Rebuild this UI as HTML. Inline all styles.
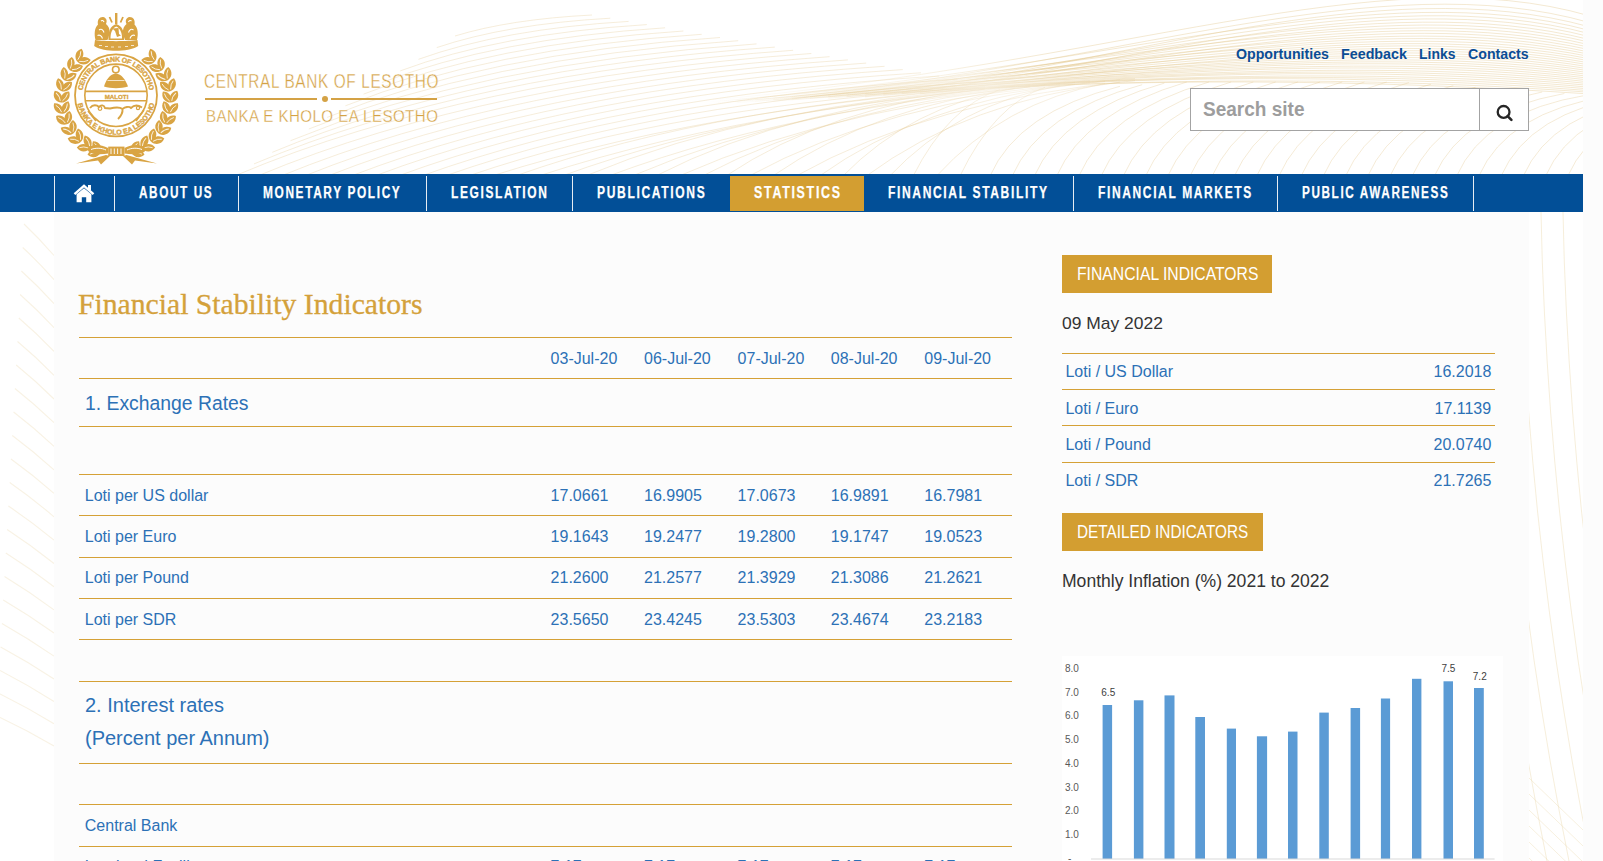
<!DOCTYPE html>
<html><head><meta charset="utf-8">
<style>
*{margin:0;padding:0;box-sizing:border-box}
html,body{width:1603px;height:861px;overflow:hidden;background:#fcfcfc;font-family:"Liberation Sans",sans-serif}
.abs{position:absolute}
.t{position:absolute;white-space:nowrap;transform-origin:0 0}
#wrap{position:absolute;left:0;top:0;width:1583px;height:861px;background:#fff;overflow:hidden}
#content{position:absolute;left:54px;top:212px;width:1475px;height:649px;background:#fcfcfc}
.nav{position:absolute;left:0;top:174px;width:1583px;height:38px;background:#024f97}
.dv{position:absolute;top:176px;width:1px;height:35px;background:#e6ecf3}
.hl{position:absolute;left:79px;width:933px;height:1px;background:#d5a136}
.sl{position:absolute;left:1062px;width:433px;height:1px;background:#d5a136}
.gbtn{position:absolute;left:1062px;height:38px;background:#d39e31}
</style></head><body>
<div id="wrap">
<svg class="abs" style="left:0;top:0" width="1583" height="861" viewBox="0 0 1583 861"><defs><linearGradient id="rfg" gradientUnits="userSpaceOnUse" x1="700" y1="0" x2="1050" y2="0"><stop offset="0" stop-color="#e3c88f" stop-opacity="0"/><stop offset="1" stop-color="#e3c88f" stop-opacity="1"/></linearGradient><clipPath id="rsc"><rect x="1529" y="212" width="54" height="649"/></clipPath><radialGradient id="pg" cx="0.5" cy="0.5" r="0.5"><stop offset="0" stop-color="#fff" stop-opacity="0.55"/><stop offset="1" stop-color="#fff" stop-opacity="0"/></radialGradient></defs><g><path d="M455.0,36.0 Q509.8,19.2 592.0,15.0" fill="none" stroke="#e3c88f" stroke-width="0.9" opacity="0.36"/><path d="M436.7,47.6 Q506.1,24.1 610.3,18.2" fill="none" stroke="#e3c88f" stroke-width="0.9" opacity="0.36"/><path d="M418.5,59.3 Q502.5,29.0 628.6,21.4" fill="none" stroke="#e3c88f" stroke-width="0.9" opacity="0.36"/><path d="M400.2,70.9 Q498.8,33.9 646.8,24.6" fill="none" stroke="#e3c88f" stroke-width="0.9" opacity="0.36"/><path d="M381.9,82.5 Q495.2,38.8 665.1,27.8" fill="none" stroke="#e3c88f" stroke-width="0.9" opacity="0.36"/><path d="M363.6,94.1 Q491.5,43.7 683.4,31.0" fill="none" stroke="#e3c88f" stroke-width="0.9" opacity="0.36"/><path d="M345.4,105.8 Q487.9,48.6 701.7,34.3" fill="none" stroke="#e3c88f" stroke-width="0.9" opacity="0.36"/><path d="M327.1,117.4 Q484.2,53.5 720.0,37.5" fill="none" stroke="#e3c88f" stroke-width="0.9" opacity="0.36"/><path d="M308.8,129.0 Q480.6,58.3 738.2,40.7" fill="none" stroke="#e3c88f" stroke-width="0.9" opacity="0.36"/><path d="M290.5,140.7 Q476.9,63.2 756.5,43.9" fill="none" stroke="#e3c88f" stroke-width="0.9" opacity="0.36"/><path d="M272.3,152.3 Q473.3,68.1 774.8,47.1" fill="none" stroke="#e3c88f" stroke-width="0.9" opacity="0.36"/><path d="M254.0,163.9 Q469.6,73.0 793.1,50.3" fill="none" stroke="#e3c88f" stroke-width="0.9" opacity="0.36"/><path d="M235.7,175.5 Q466.0,77.9 811.3,53.5" fill="none" stroke="#e3c88f" stroke-width="0.9" opacity="0.36"/><path d="M257.5,176.0 Q486.3,80.6 829.6,56.7" fill="none" stroke="#e3c88f" stroke-width="0.9" opacity="0.36"/><path d="M280.9,176.0 Q507.7,83.1 847.9,59.9" fill="none" stroke="#e3c88f" stroke-width="0.9" opacity="0.36"/><path d="M304.3,176.0 Q529.1,85.7 866.2,63.1" fill="none" stroke="#e3c88f" stroke-width="0.9" opacity="0.36"/><path d="M327.7,176.0 Q550.4,88.3 884.5,66.3" fill="none" stroke="#e3c88f" stroke-width="0.9" opacity="0.36"/><path d="M351.1,176.0 Q571.8,90.8 902.7,69.6" fill="none" stroke="#e3c88f" stroke-width="0.9" opacity="0.36"/><path d="M374.6,176.0 Q593.1,93.4 921.0,72.8" fill="none" stroke="#e3c88f" stroke-width="0.9" opacity="0.36"/><path d="M398.0,176.0 Q614.5,96.0 939.3,76.0" fill="none" stroke="#e3c88f" stroke-width="0.9" opacity="0.36"/><path d="M421.4,176.0 Q635.9,98.5 957.6,79.2" fill="none" stroke="#e3c88f" stroke-width="0.9" opacity="0.36"/><path d="M444.8,176.0 Q657.2,101.1 975.9,82.4" fill="none" stroke="#e3c88f" stroke-width="0.9" opacity="0.36"/><path d="M468.2,176.0 Q674.9,104.8 985.0,87.0" fill="none" stroke="#e3c88f" stroke-width="0.9" opacity="0.36"/><path d="M491.7,176.0 Q731.0,99.9 1090.0,80.9" fill="none" stroke="#e3c88f" stroke-width="0.9" opacity="0.36"/><path d="M515.1,176.0 Q721.0,102.9 1030.0,84.7" fill="none" stroke="#e3c88f" stroke-width="0.9" opacity="0.36"/><path d="M538.5,176.0 Q777.1,98.0 1135.0,78.6" fill="none" stroke="#e3c88f" stroke-width="0.9" opacity="0.36"/><path d="M561.9,176.0 Q767.1,101.1 1075.0,82.3" fill="none" stroke="#e3c88f" stroke-width="0.9" opacity="0.36"/><path d="M585.3,176.0 Q757.2,104.1 1015.0,86.1" fill="none" stroke="#e3c88f" stroke-width="0.9" opacity="0.36"/><path d="M608.7,176.0 Q813.2,99.2 1120.0,80.0" fill="none" stroke="#e3c88f" stroke-width="0.9" opacity="0.36"/><path d="M632.2,176.0 Q803.3,102.2 1060.0,83.8" fill="none" stroke="#e3c88f" stroke-width="0.9" opacity="0.36"/><path d="M655.6,176.0 Q793.3,105.3 1000.0,87.6" fill="none" stroke="#e3c88f" stroke-width="0.9" opacity="0.36"/><path d="M679.0,176.0 Q849.4,100.4 1105.0,81.5" fill="none" stroke="#e3c88f" stroke-width="0.9" opacity="0.36"/><path d="M702.4,176.0 Q839.4,103.4 1045.0,85.3" fill="none" stroke="#e3c88f" stroke-width="0.9" opacity="0.36"/><path d="M725.8,176.0 Q829.5,106.4 985.0,89.0" fill="none" stroke="#e3c88f" stroke-width="0.9" opacity="0.36"/><path d="M749.2,176.0 Q885.5,101.5 1090.0,82.9" fill="none" stroke="#e3c88f" stroke-width="0.9" opacity="0.36"/><path d="M772.7,176.0 Q875.6,104.6 1030.0,86.7" fill="none" stroke="#e3c88f" stroke-width="0.9" opacity="0.36"/><path d="M796.1,176.0 Q931.6,99.7 1135.0,80.6" fill="none" stroke="#e3c88f" stroke-width="0.9" opacity="0.36"/><path d="M819.5,176.0 Q921.7,102.7 1075.0,84.4" fill="none" stroke="#e3c88f" stroke-width="0.9" opacity="0.36"/><path d="M842.9,176.0 Q911.7,105.7 1015.0,88.2" fill="none" stroke="#e3c88f" stroke-width="0.9" opacity="0.36"/><path d="M866.3,176.0 Q967.8,100.8 1120.0,82.1" fill="none" stroke="#e3c88f" stroke-width="0.9" opacity="0.36"/><path d="M889.7,176.0 Q957.8,103.9 1060.0,85.8" fill="none" stroke="#e3c88f" stroke-width="0.9" opacity="0.36"/><path d="M913.2,176.0 Q947.9,106.9 1000.0,89.6" fill="none" stroke="#e3c88f" stroke-width="0.9" opacity="0.36"/><path d="M936.6,176.0 Q1003.9,102.0 1105.0,83.5" fill="none" stroke="#e3c88f" stroke-width="0.9" opacity="0.36"/><path d="M960.0,176.0 Q994.0,105.0 1045.0,87.3" fill="none" stroke="#e3c88f" stroke-width="0.9" opacity="0.36"/><path d="M700.0,101.0 C1120.0,65.0 1380.0,-45.0 1590.0,16.0" fill="none" stroke="url(#rfg)" stroke-width="0.9" opacity="0.45"/><path d="M791.6666666666666,96.5 C1120.0,65.3 1380.0,-37.4 1590.0,22.7" fill="none" stroke="url(#rfg)" stroke-width="0.9" opacity="0.45"/><path d="M883.3333333333334,92.1 C1120.0,65.6 1380.0,-31.7 1590.0,27.0" fill="none" stroke="url(#rfg)" stroke-width="0.9" opacity="0.45"/><path d="M736.6666666666666,99.5 C1120.0,65.9 1380.0,-26.6 1590.0,30.6" fill="none" stroke="url(#rfg)" stroke-width="0.9" opacity="0.45"/><path d="M828.3333333333334,95.1 C1120.0,66.2 1380.0,-21.9 1590.0,33.8" fill="none" stroke="url(#rfg)" stroke-width="0.9" opacity="0.45"/><path d="M920.0,90.6 C1120.0,66.5 1380.0,-17.4 1590.0,36.8" fill="none" stroke="url(#rfg)" stroke-width="0.9" opacity="0.45"/><path d="M773.3333333333334,98.1 C1120.0,66.8 1380.0,-13.0 1590.0,39.7" fill="none" stroke="url(#rfg)" stroke-width="0.9" opacity="0.45"/><path d="M865.0,93.6 C1120.0,67.1 1380.0,-8.8 1590.0,42.3" fill="none" stroke="url(#rfg)" stroke-width="0.9" opacity="0.45"/><path d="M718.3333333333334,101.1 C1120.0,67.4 1380.0,-4.8 1590.0,44.9" fill="none" stroke="url(#rfg)" stroke-width="0.9" opacity="0.45"/><path d="M810.0,96.6 C1120.0,67.7 1380.0,-0.8 1590.0,47.4" fill="none" stroke="url(#rfg)" stroke-width="0.9" opacity="0.45"/><path d="M901.6666666666666,92.1 C1120.0,68.0 1380.0,3.1 1590.0,49.8" fill="none" stroke="url(#rfg)" stroke-width="0.9" opacity="0.45"/><path d="M755.0,99.6 C1120.0,68.3 1380.0,6.9 1590.0,52.2" fill="none" stroke="url(#rfg)" stroke-width="0.9" opacity="0.45"/><path d="M846.6666666666666,95.1 C1120.0,68.6 1380.0,10.6 1590.0,54.4" fill="none" stroke="url(#rfg)" stroke-width="0.9" opacity="0.45"/><path d="M700.0,102.6 C1120.0,68.9 1380.0,14.3 1590.0,56.6" fill="none" stroke="url(#rfg)" stroke-width="0.9" opacity="0.45"/><path d="M791.6666666666666,98.1 C1120.0,69.2 1380.0,18.0 1590.0,58.8" fill="none" stroke="url(#rfg)" stroke-width="0.9" opacity="0.45"/><path d="M883.3333333333334,93.7 C1120.0,69.5 1380.0,21.5 1590.0,60.9" fill="none" stroke="url(#rfg)" stroke-width="0.9" opacity="0.45"/><path d="M736.6666666666666,101.1 C1120.0,69.8 1380.0,25.0 1590.0,63.0" fill="none" stroke="url(#rfg)" stroke-width="0.9" opacity="0.45"/><path d="M828.3333333333334,96.6 C1120.0,70.2 1380.0,28.5 1590.0,65.0" fill="none" stroke="url(#rfg)" stroke-width="0.9" opacity="0.45"/><path d="M920.0,92.2 C1120.0,70.5 1380.0,32.0 1590.0,67.0" fill="none" stroke="url(#rfg)" stroke-width="0.9" opacity="0.45"/><path d="M773.3333333333334,99.6 C1120.0,70.8 1380.0,35.4 1590.0,69.0" fill="none" stroke="url(#rfg)" stroke-width="0.9" opacity="0.45"/><path d="M865.0,95.2 C1120.0,71.1 1380.0,38.7 1590.0,70.9" fill="none" stroke="url(#rfg)" stroke-width="0.9" opacity="0.45"/><path d="M718.3333333333334,102.6 C1120.0,71.4 1380.0,42.1 1590.0,72.8" fill="none" stroke="url(#rfg)" stroke-width="0.9" opacity="0.45"/><path d="M810.0,98.2 C1120.0,71.7 1380.0,45.4 1590.0,74.7" fill="none" stroke="url(#rfg)" stroke-width="0.9" opacity="0.45"/><path d="M901.6666666666666,93.7 C1120.0,72.0 1380.0,48.6 1590.0,76.6" fill="none" stroke="url(#rfg)" stroke-width="0.9" opacity="0.45"/><path d="M755.0,101.2 C1120.0,72.3 1380.0,51.9 1590.0,78.4" fill="none" stroke="url(#rfg)" stroke-width="0.9" opacity="0.45"/><path d="M846.6666666666666,96.7 C1120.0,72.6 1380.0,55.1 1590.0,80.2" fill="none" stroke="url(#rfg)" stroke-width="0.9" opacity="0.45"/><path d="M700.0,104.2 C1120.0,72.9 1380.0,58.3 1590.0,82.0" fill="none" stroke="url(#rfg)" stroke-width="0.9" opacity="0.45"/><path d="M791.6666666666666,99.7 C1120.0,73.2 1380.0,61.5 1590.0,83.8" fill="none" stroke="url(#rfg)" stroke-width="0.9" opacity="0.45"/><path d="M883.3333333333334,95.2 C1120.0,73.5 1380.0,64.6 1590.0,85.5" fill="none" stroke="url(#rfg)" stroke-width="0.9" opacity="0.45"/><path d="M736.6666666666666,102.7 C1120.0,73.8 1380.0,67.7 1590.0,87.3" fill="none" stroke="url(#rfg)" stroke-width="0.9" opacity="0.45"/><path d="M828.3333333333334,98.2 C1120.0,74.1 1380.0,70.8 1590.0,89.0" fill="none" stroke="url(#rfg)" stroke-width="0.9" opacity="0.45"/><path d="M920.0,93.8 C1120.0,74.4 1380.0,73.9 1590.0,90.7" fill="none" stroke="url(#rfg)" stroke-width="0.9" opacity="0.45"/><path d="M773.3333333333334,101.2 C1120.0,74.7 1380.0,77.0 1590.0,92.3" fill="none" stroke="url(#rfg)" stroke-width="0.9" opacity="0.45"/><path d="M865.0,96.8 C1120.0,75.0 1380.0,80.0 1590.0,94.0" fill="none" stroke="url(#rfg)" stroke-width="0.9" opacity="0.45"/><path d="M990.0,176 Q1018.0,112.0 1120.0,86.3" fill="none" stroke="#e3c88f" stroke-width="0.9" opacity="0.40"/><path d="M1012.2,176 Q1040.2,112.0 1142.2,84.7" fill="none" stroke="#e3c88f" stroke-width="0.9" opacity="0.40"/><path d="M1034.4,176 Q1062.4,112.0 1164.4,83.1" fill="none" stroke="#e3c88f" stroke-width="0.9" opacity="0.40"/><path d="M1056.7,176 Q1084.7,112.0 1186.7,82.0" fill="none" stroke="#e3c88f" stroke-width="0.9" opacity="0.40"/><path d="M1078.9,176 Q1106.9,112.0 1208.9,82.0" fill="none" stroke="#e3c88f" stroke-width="0.9" opacity="0.40"/><path d="M1101.1,176 Q1129.1,112.0 1231.1,82.0" fill="none" stroke="#e3c88f" stroke-width="0.9" opacity="0.40"/><path d="M1123.3,176 Q1151.3,112.0 1253.3,82.0" fill="none" stroke="#e3c88f" stroke-width="0.9" opacity="0.40"/><path d="M1145.6,176 Q1173.6,112.0 1275.6,82.0" fill="none" stroke="#e3c88f" stroke-width="0.9" opacity="0.40"/><path d="M1167.8,176 Q1195.8,112.0 1297.8,82.0" fill="none" stroke="#e3c88f" stroke-width="0.9" opacity="0.40"/><path d="M1190.0,176 Q1218.0,112.0 1320.0,82.0" fill="none" stroke="#e3c88f" stroke-width="0.9" opacity="0.40"/><path d="M1212.2,176 Q1240.2,112.0 1342.2,82.0" fill="none" stroke="#e3c88f" stroke-width="0.9" opacity="0.40"/><path d="M1234.4,176 Q1262.4,112.0 1364.4,82.0" fill="none" stroke="#e3c88f" stroke-width="0.9" opacity="0.40"/><path d="M1256.7,176 Q1284.7,112.0 1386.7,82.0" fill="none" stroke="#e3c88f" stroke-width="0.9" opacity="0.40"/><path d="M1278.9,176 Q1306.9,112.0 1408.9,82.6" fill="none" stroke="#e3c88f" stroke-width="0.9" opacity="0.40"/><path d="M1301.1,176 Q1329.1,112.0 1431.1,84.2" fill="none" stroke="#e3c88f" stroke-width="0.9" opacity="0.40"/><path d="M1323.3,176 Q1351.3,112.0 1453.3,85.7" fill="none" stroke="#e3c88f" stroke-width="0.9" opacity="0.40"/><path d="M1345.6,176 Q1373.6,112.0 1475.6,87.3" fill="none" stroke="#e3c88f" stroke-width="0.9" opacity="0.40"/><path d="M1367.8,176 Q1395.8,112.0 1497.8,88.8" fill="none" stroke="#e3c88f" stroke-width="0.9" opacity="0.40"/><path d="M1390.0,176 Q1418.0,112.0 1520.0,90.4" fill="none" stroke="#e3c88f" stroke-width="0.9" opacity="0.40"/><path d="M1412.2,176 Q1440.2,112.0 1542.2,92.0" fill="none" stroke="#e3c88f" stroke-width="0.9" opacity="0.40"/><path d="M1434.4,176 Q1462.4,112.0 1564.4,93.5" fill="none" stroke="#e3c88f" stroke-width="0.9" opacity="0.40"/><path d="M1456.7,176 Q1484.7,112.0 1586.7,95.1" fill="none" stroke="#e3c88f" stroke-width="0.9" opacity="0.40"/><path d="M1478.9,176 Q1506.9,112.0 1608.9,96.0" fill="none" stroke="#e3c88f" stroke-width="0.9" opacity="0.40"/><path d="M1501.1,176 Q1529.1,112.0 1631.1,96.0" fill="none" stroke="#e3c88f" stroke-width="0.9" opacity="0.40"/><path d="M1523.3,176 Q1551.3,112.0 1653.3,96.0" fill="none" stroke="#e3c88f" stroke-width="0.9" opacity="0.40"/><path d="M1545.6,176 Q1573.6,112.0 1675.6,96.0" fill="none" stroke="#e3c88f" stroke-width="0.9" opacity="0.40"/><path d="M1567.8,176 Q1595.8,112.0 1697.8,96.0" fill="none" stroke="#e3c88f" stroke-width="0.9" opacity="0.40"/><path d="M1590.0,176 Q1618.0,112.0 1720.0,96.0" fill="none" stroke="#e3c88f" stroke-width="0.9" opacity="0.40"/><path d="M24.0,224.0 Q39.0,238.2 54,255.5" fill="none" stroke="#ecdcb3" stroke-width="1.1" opacity="0.36"/><path d="M22.7,247.5 Q38.4,261.9 54,279.6" fill="none" stroke="#ecdcb3" stroke-width="1.1" opacity="0.36"/><path d="M21.4,271.0 Q37.7,285.7 54,303.6" fill="none" stroke="#ecdcb3" stroke-width="1.1" opacity="0.36"/><path d="M20.1,294.5 Q37.0,309.4 54,327.6" fill="none" stroke="#ecdcb3" stroke-width="1.1" opacity="0.36"/><path d="M18.8,318.0 Q36.4,333.0 54,351.4" fill="none" stroke="#ecdcb3" stroke-width="1.1" opacity="0.36"/><path d="M17.5,341.5 Q35.8,356.7 54,375.3" fill="none" stroke="#ecdcb3" stroke-width="1.1" opacity="0.36"/><path d="M16.2,365.0 Q35.1,380.3 54,399.0" fill="none" stroke="#ecdcb3" stroke-width="1.1" opacity="0.36"/><path d="M14.9,388.5 Q34.5,403.9 54,422.7" fill="none" stroke="#ecdcb3" stroke-width="1.1" opacity="0.36"/><path d="M13.6,412.0 Q33.8,427.5 54,446.3" fill="none" stroke="#ecdcb3" stroke-width="1.1" opacity="0.36"/><path d="M12.3,435.5 Q33.1,451.0 54,469.9" fill="none" stroke="#ecdcb3" stroke-width="1.1" opacity="0.36"/><path d="M11.0,459.0 Q32.5,474.5 54,493.4" fill="none" stroke="#ecdcb3" stroke-width="1.1" opacity="0.36"/><path d="M9.7,482.5 Q31.9,497.9 54,516.8" fill="none" stroke="#ecdcb3" stroke-width="1.1" opacity="0.36"/><path d="M8.4,506.0 Q31.2,521.4 54,540.2" fill="none" stroke="#ecdcb3" stroke-width="1.1" opacity="0.36"/><path d="M7.1,529.5 Q30.5,544.8 54,563.5" fill="none" stroke="#ecdcb3" stroke-width="1.1" opacity="0.36"/><path d="M5.8,553.0 Q29.9,568.2 54,586.7" fill="none" stroke="#ecdcb3" stroke-width="1.1" opacity="0.36"/><path d="M4.5,576.5 Q29.2,591.5 54,609.9" fill="none" stroke="#ecdcb3" stroke-width="1.1" opacity="0.36"/><path d="M3.2,600.0 Q28.6,614.9 54,633.0" fill="none" stroke="#ecdcb3" stroke-width="1.1" opacity="0.36"/><path d="M1.9,623.5 Q27.9,638.2 54,656.1" fill="none" stroke="#ecdcb3" stroke-width="1.1" opacity="0.36"/><path d="M0.6,647.0 Q27.3,661.4 54,679.0" fill="none" stroke="#ecdcb3" stroke-width="1.1" opacity="0.36"/><path d="M0.0,670.5 Q27.0,684.5 54,701.5" fill="none" stroke="#ecdcb3" stroke-width="1.1" opacity="0.36"/><path d="M0.0,694.0 Q27.0,707.4 54,723.7" fill="none" stroke="#ecdcb3" stroke-width="1.1" opacity="0.36"/><path d="M0.0,717.5 Q27.0,730.3 54,745.9" fill="none" stroke="#ecdcb3" stroke-width="1.1" opacity="0.36"/><g clip-path="url(#rsc)"><path d="M1453.0,212.0 L1454.3,262.0 L1456.4,312.0 L1459.2,362.0 L1462.6,412.0 L1466.8,462.0 L1471.6,512.0 L1477.2,562.0 L1483.4,612.0 L1490.3,662.0 L1498.0,712.0 L1506.3,762.0 L1515.4,812.0 L1525.2,862.0" fill="none" stroke="#ead9b0" stroke-width="1" opacity="0.45"/><path d="M1475.0,212.0 L1476.3,262.0 L1478.4,312.0 L1481.2,362.0 L1484.6,412.0 L1488.8,462.0 L1493.6,512.0 L1499.2,562.0 L1505.4,612.0 L1512.3,662.0 L1520.0,712.0 L1528.3,762.0 L1537.4,812.0 L1547.2,862.0" fill="none" stroke="#ead9b0" stroke-width="1" opacity="0.45"/><path d="M1497.0,212.0 L1498.3,262.0 L1500.4,312.0 L1503.2,362.0 L1506.6,412.0 L1510.8,462.0 L1515.6,512.0 L1521.2,562.0 L1527.4,612.0 L1534.3,662.0 L1542.0,712.0 L1550.3,762.0 L1559.4,812.0 L1569.2,862.0" fill="none" stroke="#ead9b0" stroke-width="1" opacity="0.45"/><path d="M1519.0,212.0 L1520.3,262.0 L1522.4,312.0 L1525.2,362.0 L1528.6,412.0 L1532.8,462.0 L1537.6,512.0 L1543.2,562.0 L1549.4,612.0 L1556.3,662.0 L1564.0,712.0 L1572.3,762.0 L1581.4,812.0 L1591.2,862.0" fill="none" stroke="#ead9b0" stroke-width="1" opacity="0.45"/><path d="M1541.0,212.0 L1542.3,262.0 L1544.4,312.0 L1547.2,362.0 L1550.6,412.0 L1554.8,462.0 L1559.6,512.0 L1565.2,562.0 L1571.4,612.0 L1578.3,662.0 L1586.0,712.0 L1594.3,762.0 L1603.4,812.0 L1613.2,862.0" fill="none" stroke="#ead9b0" stroke-width="1" opacity="0.45"/><path d="M1563.0,212.0 L1564.3,262.0 L1566.4,312.0 L1569.2,362.0 L1572.6,412.0 L1576.8,462.0 L1581.6,512.0 L1587.2,562.0 L1593.4,612.0 L1600.3,662.0 L1608.0,712.0 L1616.3,762.0 L1625.4,812.0 L1635.2,862.0" fill="none" stroke="#ead9b0" stroke-width="1" opacity="0.45"/><path d="M1585.0,212.0 L1586.3,262.0 L1588.4,312.0 L1591.2,362.0 L1594.6,412.0 L1598.8,462.0 L1603.6,512.0 L1609.2,562.0 L1615.4,612.0 L1622.3,662.0 L1630.0,712.0 L1638.3,762.0 L1647.4,812.0 L1657.2,862.0" fill="none" stroke="#ead9b0" stroke-width="1" opacity="0.45"/><path d="M1607.0,212.0 L1608.3,262.0 L1610.4,312.0 L1613.2,362.0 L1616.6,412.0 L1620.8,462.0 L1625.6,512.0 L1631.2,562.0 L1637.4,612.0 L1644.3,662.0 L1652.0,712.0 L1660.3,762.0 L1669.4,812.0 L1679.2,862.0" fill="none" stroke="#ead9b0" stroke-width="1" opacity="0.45"/><path d="M1529,778 L1583,830" fill="none" stroke="#ead9b0" stroke-width="1" opacity="0.4"/><path d="M1529,794 L1583,846" fill="none" stroke="#ead9b0" stroke-width="1" opacity="0.4"/><path d="M1529,810 L1583,862" fill="none" stroke="#ead9b0" stroke-width="1" opacity="0.4"/><path d="M1529,826 L1583,878" fill="none" stroke="#ead9b0" stroke-width="1" opacity="0.4"/><path d="M1529,842 L1583,894" fill="none" stroke="#ead9b0" stroke-width="1" opacity="0.4"/><path d="M1529,858 L1583,910" fill="none" stroke="#ead9b0" stroke-width="1" opacity="0.4"/></g></g><ellipse cx="985" cy="88" rx="150" ry="22" fill="url(#pg)"/></svg>
<div id="content"></div>
<svg class="abs" style="left:0;top:0" width="200" height="170" viewBox="0 0 200 170"><g><g transform="translate(84.0,60.8) rotate(83.3)"><path d="M0,-6.8 C5.7,-2.7 4.2,4.0 0,6.8 C-4.2,4.0 -5.7,-2.7 0,-6.8Z" fill="#d9a443"/><path d="M0,-4.2 Q1.7,0 0,4.8" stroke="#fff" stroke-width="0.9" fill="none" opacity="0.85"/></g><g transform="translate(79.4,55.2) rotate(19.3)"><path d="M0,-6.8 C5.7,-2.7 4.2,4.0 0,6.8 C-4.2,4.0 -5.7,-2.7 0,-6.8Z" fill="#d9a443"/><path d="M0,-4.2 Q1.7,0 0,4.8" stroke="#fff" stroke-width="0.9" fill="none" opacity="0.85"/></g><g transform="translate(76.5,68.2) rotate(71.4)"><path d="M0,-6.8 C5.7,-2.7 4.2,4.0 0,6.8 C-4.2,4.0 -5.7,-2.7 0,-6.8Z" fill="#d9a443"/><path d="M0,-4.2 Q1.7,0 0,4.8" stroke="#fff" stroke-width="0.9" fill="none" opacity="0.85"/></g><g transform="translate(70.9,63.7) rotate(7.4)"><path d="M0,-6.8 C5.7,-2.7 4.2,4.0 0,6.8 C-4.2,4.0 -5.7,-2.7 0,-6.8Z" fill="#d9a443"/><path d="M0,-4.2 Q1.7,0 0,4.8" stroke="#fff" stroke-width="0.9" fill="none" opacity="0.85"/></g><g transform="translate(70.7,77.0) rotate(59.4)"><path d="M0,-6.8 C5.7,-2.7 4.2,4.0 0,6.8 C-4.2,4.0 -5.7,-2.7 0,-6.8Z" fill="#d9a443"/><path d="M0,-4.2 Q1.7,0 0,4.8" stroke="#fff" stroke-width="0.9" fill="none" opacity="0.85"/></g><g transform="translate(64.3,73.7) rotate(-4.6)"><path d="M0,-6.8 C5.7,-2.7 4.2,4.0 0,6.8 C-4.2,4.0 -5.7,-2.7 0,-6.8Z" fill="#d9a443"/><path d="M0,-4.2 Q1.7,0 0,4.8" stroke="#fff" stroke-width="0.9" fill="none" opacity="0.85"/></g><g transform="translate(66.9,86.7) rotate(47.4)"><path d="M0,-6.8 C5.7,-2.7 4.2,4.0 0,6.8 C-4.2,4.0 -5.7,-2.7 0,-6.8Z" fill="#d9a443"/><path d="M0,-4.2 Q1.7,0 0,4.8" stroke="#fff" stroke-width="0.9" fill="none" opacity="0.85"/></g><g transform="translate(60.0,84.8) rotate(-16.6)"><path d="M0,-6.8 C5.7,-2.7 4.2,4.0 0,6.8 C-4.2,4.0 -5.7,-2.7 0,-6.8Z" fill="#d9a443"/><path d="M0,-4.2 Q1.7,0 0,4.8" stroke="#fff" stroke-width="0.9" fill="none" opacity="0.85"/></g><g transform="translate(65.2,97.0) rotate(35.4)"><path d="M0,-6.8 C5.7,-2.7 4.2,4.0 0,6.8 C-4.2,4.0 -5.7,-2.7 0,-6.8Z" fill="#d9a443"/><path d="M0,-4.2 Q1.7,0 0,4.8" stroke="#fff" stroke-width="0.9" fill="none" opacity="0.85"/></g><g transform="translate(58.0,96.6) rotate(-28.6)"><path d="M0,-6.8 C5.7,-2.7 4.2,4.0 0,6.8 C-4.2,4.0 -5.7,-2.7 0,-6.8Z" fill="#d9a443"/><path d="M0,-4.2 Q1.7,0 0,4.8" stroke="#fff" stroke-width="0.9" fill="none" opacity="0.85"/></g><g transform="translate(65.7,107.4) rotate(23.4)"><path d="M0,-6.8 C5.7,-2.7 4.2,4.0 0,6.8 C-4.2,4.0 -5.7,-2.7 0,-6.8Z" fill="#d9a443"/><path d="M0,-4.2 Q1.7,0 0,4.8" stroke="#fff" stroke-width="0.9" fill="none" opacity="0.85"/></g><g transform="translate(58.5,108.5) rotate(-40.6)"><path d="M0,-6.8 C5.7,-2.7 4.2,4.0 0,6.8 C-4.2,4.0 -5.7,-2.7 0,-6.8Z" fill="#d9a443"/><path d="M0,-4.2 Q1.7,0 0,4.8" stroke="#fff" stroke-width="0.9" fill="none" opacity="0.85"/></g><g transform="translate(68.3,117.6) rotate(11.4)"><path d="M0,-6.8 C5.7,-2.7 4.2,4.0 0,6.8 C-4.2,4.0 -5.7,-2.7 0,-6.8Z" fill="#d9a443"/><path d="M0,-4.2 Q1.7,0 0,4.8" stroke="#fff" stroke-width="0.9" fill="none" opacity="0.85"/></g><g transform="translate(61.5,120.1) rotate(-52.6)"><path d="M0,-6.8 C5.7,-2.7 4.2,4.0 0,6.8 C-4.2,4.0 -5.7,-2.7 0,-6.8Z" fill="#d9a443"/><path d="M0,-4.2 Q1.7,0 0,4.8" stroke="#fff" stroke-width="0.9" fill="none" opacity="0.85"/></g><g transform="translate(73.0,126.9) rotate(-0.5)"><path d="M0,-6.8 C5.7,-2.7 4.2,4.0 0,6.8 C-4.2,4.0 -5.7,-2.7 0,-6.8Z" fill="#d9a443"/><path d="M0,-4.2 Q1.7,0 0,4.8" stroke="#fff" stroke-width="0.9" fill="none" opacity="0.85"/></g><g transform="translate(66.9,130.8) rotate(-64.5)"><path d="M0,-6.8 C5.7,-2.7 4.2,4.0 0,6.8 C-4.2,4.0 -5.7,-2.7 0,-6.8Z" fill="#d9a443"/><path d="M0,-4.2 Q1.7,0 0,4.8" stroke="#fff" stroke-width="0.9" fill="none" opacity="0.85"/></g><g transform="translate(79.5,135.1) rotate(-12.5)"><path d="M0,-6.8 C5.7,-2.7 4.2,4.0 0,6.8 C-4.2,4.0 -5.7,-2.7 0,-6.8Z" fill="#d9a443"/><path d="M0,-4.2 Q1.7,0 0,4.8" stroke="#fff" stroke-width="0.9" fill="none" opacity="0.85"/></g><g transform="translate(74.3,140.2) rotate(-76.5)"><path d="M0,-6.8 C5.7,-2.7 4.2,4.0 0,6.8 C-4.2,4.0 -5.7,-2.7 0,-6.8Z" fill="#d9a443"/><path d="M0,-4.2 Q1.7,0 0,4.8" stroke="#fff" stroke-width="0.9" fill="none" opacity="0.85"/></g><g transform="translate(87.6,141.8) rotate(-24.3)"><path d="M0,-6.8 C5.7,-2.7 4.2,4.0 0,6.8 C-4.2,4.0 -5.7,-2.7 0,-6.8Z" fill="#d9a443"/><path d="M0,-4.2 Q1.7,0 0,4.8" stroke="#fff" stroke-width="0.9" fill="none" opacity="0.85"/></g><g transform="translate(83.6,147.8) rotate(-88.3)"><path d="M0,-6.8 C5.7,-2.7 4.2,4.0 0,6.8 C-4.2,4.0 -5.7,-2.7 0,-6.8Z" fill="#d9a443"/><path d="M0,-4.2 Q1.7,0 0,4.8" stroke="#fff" stroke-width="0.9" fill="none" opacity="0.85"/></g><g transform="translate(96.9,146.7) rotate(-36.2)"><path d="M0,-6.8 C5.7,-2.7 4.2,4.0 0,6.8 C-4.2,4.0 -5.7,-2.7 0,-6.8Z" fill="#d9a443"/><path d="M0,-4.2 Q1.7,0 0,4.8" stroke="#fff" stroke-width="0.9" fill="none" opacity="0.85"/></g><g transform="translate(94.2,153.4) rotate(-100.2)"><path d="M0,-6.8 C5.7,-2.7 4.2,4.0 0,6.8 C-4.2,4.0 -5.7,-2.7 0,-6.8Z" fill="#d9a443"/><path d="M0,-4.2 Q1.7,0 0,4.8" stroke="#fff" stroke-width="0.9" fill="none" opacity="0.85"/></g></g><g transform="translate(232,0) scale(-1,1)"><g transform="translate(84.0,60.8) rotate(83.3)"><path d="M0,-6.8 C5.7,-2.7 4.2,4.0 0,6.8 C-4.2,4.0 -5.7,-2.7 0,-6.8Z" fill="#d9a443"/><path d="M0,-4.2 Q1.7,0 0,4.8" stroke="#fff" stroke-width="0.9" fill="none" opacity="0.85"/></g><g transform="translate(79.4,55.2) rotate(19.3)"><path d="M0,-6.8 C5.7,-2.7 4.2,4.0 0,6.8 C-4.2,4.0 -5.7,-2.7 0,-6.8Z" fill="#d9a443"/><path d="M0,-4.2 Q1.7,0 0,4.8" stroke="#fff" stroke-width="0.9" fill="none" opacity="0.85"/></g><g transform="translate(76.5,68.2) rotate(71.4)"><path d="M0,-6.8 C5.7,-2.7 4.2,4.0 0,6.8 C-4.2,4.0 -5.7,-2.7 0,-6.8Z" fill="#d9a443"/><path d="M0,-4.2 Q1.7,0 0,4.8" stroke="#fff" stroke-width="0.9" fill="none" opacity="0.85"/></g><g transform="translate(70.9,63.7) rotate(7.4)"><path d="M0,-6.8 C5.7,-2.7 4.2,4.0 0,6.8 C-4.2,4.0 -5.7,-2.7 0,-6.8Z" fill="#d9a443"/><path d="M0,-4.2 Q1.7,0 0,4.8" stroke="#fff" stroke-width="0.9" fill="none" opacity="0.85"/></g><g transform="translate(70.7,77.0) rotate(59.4)"><path d="M0,-6.8 C5.7,-2.7 4.2,4.0 0,6.8 C-4.2,4.0 -5.7,-2.7 0,-6.8Z" fill="#d9a443"/><path d="M0,-4.2 Q1.7,0 0,4.8" stroke="#fff" stroke-width="0.9" fill="none" opacity="0.85"/></g><g transform="translate(64.3,73.7) rotate(-4.6)"><path d="M0,-6.8 C5.7,-2.7 4.2,4.0 0,6.8 C-4.2,4.0 -5.7,-2.7 0,-6.8Z" fill="#d9a443"/><path d="M0,-4.2 Q1.7,0 0,4.8" stroke="#fff" stroke-width="0.9" fill="none" opacity="0.85"/></g><g transform="translate(66.9,86.7) rotate(47.4)"><path d="M0,-6.8 C5.7,-2.7 4.2,4.0 0,6.8 C-4.2,4.0 -5.7,-2.7 0,-6.8Z" fill="#d9a443"/><path d="M0,-4.2 Q1.7,0 0,4.8" stroke="#fff" stroke-width="0.9" fill="none" opacity="0.85"/></g><g transform="translate(60.0,84.8) rotate(-16.6)"><path d="M0,-6.8 C5.7,-2.7 4.2,4.0 0,6.8 C-4.2,4.0 -5.7,-2.7 0,-6.8Z" fill="#d9a443"/><path d="M0,-4.2 Q1.7,0 0,4.8" stroke="#fff" stroke-width="0.9" fill="none" opacity="0.85"/></g><g transform="translate(65.2,97.0) rotate(35.4)"><path d="M0,-6.8 C5.7,-2.7 4.2,4.0 0,6.8 C-4.2,4.0 -5.7,-2.7 0,-6.8Z" fill="#d9a443"/><path d="M0,-4.2 Q1.7,0 0,4.8" stroke="#fff" stroke-width="0.9" fill="none" opacity="0.85"/></g><g transform="translate(58.0,96.6) rotate(-28.6)"><path d="M0,-6.8 C5.7,-2.7 4.2,4.0 0,6.8 C-4.2,4.0 -5.7,-2.7 0,-6.8Z" fill="#d9a443"/><path d="M0,-4.2 Q1.7,0 0,4.8" stroke="#fff" stroke-width="0.9" fill="none" opacity="0.85"/></g><g transform="translate(65.7,107.4) rotate(23.4)"><path d="M0,-6.8 C5.7,-2.7 4.2,4.0 0,6.8 C-4.2,4.0 -5.7,-2.7 0,-6.8Z" fill="#d9a443"/><path d="M0,-4.2 Q1.7,0 0,4.8" stroke="#fff" stroke-width="0.9" fill="none" opacity="0.85"/></g><g transform="translate(58.5,108.5) rotate(-40.6)"><path d="M0,-6.8 C5.7,-2.7 4.2,4.0 0,6.8 C-4.2,4.0 -5.7,-2.7 0,-6.8Z" fill="#d9a443"/><path d="M0,-4.2 Q1.7,0 0,4.8" stroke="#fff" stroke-width="0.9" fill="none" opacity="0.85"/></g><g transform="translate(68.3,117.6) rotate(11.4)"><path d="M0,-6.8 C5.7,-2.7 4.2,4.0 0,6.8 C-4.2,4.0 -5.7,-2.7 0,-6.8Z" fill="#d9a443"/><path d="M0,-4.2 Q1.7,0 0,4.8" stroke="#fff" stroke-width="0.9" fill="none" opacity="0.85"/></g><g transform="translate(61.5,120.1) rotate(-52.6)"><path d="M0,-6.8 C5.7,-2.7 4.2,4.0 0,6.8 C-4.2,4.0 -5.7,-2.7 0,-6.8Z" fill="#d9a443"/><path d="M0,-4.2 Q1.7,0 0,4.8" stroke="#fff" stroke-width="0.9" fill="none" opacity="0.85"/></g><g transform="translate(73.0,126.9) rotate(-0.5)"><path d="M0,-6.8 C5.7,-2.7 4.2,4.0 0,6.8 C-4.2,4.0 -5.7,-2.7 0,-6.8Z" fill="#d9a443"/><path d="M0,-4.2 Q1.7,0 0,4.8" stroke="#fff" stroke-width="0.9" fill="none" opacity="0.85"/></g><g transform="translate(66.9,130.8) rotate(-64.5)"><path d="M0,-6.8 C5.7,-2.7 4.2,4.0 0,6.8 C-4.2,4.0 -5.7,-2.7 0,-6.8Z" fill="#d9a443"/><path d="M0,-4.2 Q1.7,0 0,4.8" stroke="#fff" stroke-width="0.9" fill="none" opacity="0.85"/></g><g transform="translate(79.5,135.1) rotate(-12.5)"><path d="M0,-6.8 C5.7,-2.7 4.2,4.0 0,6.8 C-4.2,4.0 -5.7,-2.7 0,-6.8Z" fill="#d9a443"/><path d="M0,-4.2 Q1.7,0 0,4.8" stroke="#fff" stroke-width="0.9" fill="none" opacity="0.85"/></g><g transform="translate(74.3,140.2) rotate(-76.5)"><path d="M0,-6.8 C5.7,-2.7 4.2,4.0 0,6.8 C-4.2,4.0 -5.7,-2.7 0,-6.8Z" fill="#d9a443"/><path d="M0,-4.2 Q1.7,0 0,4.8" stroke="#fff" stroke-width="0.9" fill="none" opacity="0.85"/></g><g transform="translate(87.6,141.8) rotate(-24.3)"><path d="M0,-6.8 C5.7,-2.7 4.2,4.0 0,6.8 C-4.2,4.0 -5.7,-2.7 0,-6.8Z" fill="#d9a443"/><path d="M0,-4.2 Q1.7,0 0,4.8" stroke="#fff" stroke-width="0.9" fill="none" opacity="0.85"/></g><g transform="translate(83.6,147.8) rotate(-88.3)"><path d="M0,-6.8 C5.7,-2.7 4.2,4.0 0,6.8 C-4.2,4.0 -5.7,-2.7 0,-6.8Z" fill="#d9a443"/><path d="M0,-4.2 Q1.7,0 0,4.8" stroke="#fff" stroke-width="0.9" fill="none" opacity="0.85"/></g><g transform="translate(96.9,146.7) rotate(-36.2)"><path d="M0,-6.8 C5.7,-2.7 4.2,4.0 0,6.8 C-4.2,4.0 -5.7,-2.7 0,-6.8Z" fill="#d9a443"/><path d="M0,-4.2 Q1.7,0 0,4.8" stroke="#fff" stroke-width="0.9" fill="none" opacity="0.85"/></g><g transform="translate(94.2,153.4) rotate(-100.2)"><path d="M0,-6.8 C5.7,-2.7 4.2,4.0 0,6.8 C-4.2,4.0 -5.7,-2.7 0,-6.8Z" fill="#d9a443"/><path d="M0,-4.2 Q1.7,0 0,4.8" stroke="#fff" stroke-width="0.9" fill="none" opacity="0.85"/></g></g><circle cx="116" cy="95.3" r="41" fill="#fff" stroke="#d9a443" stroke-width="1.8"/><circle cx="116" cy="95.3" r="31.2" fill="none" stroke="#d9a443" stroke-width="1.6"/><defs><path id="arcT" d="M80.5,95.3 A35.5,35.5 0 0 1 151.5,95.3"/><path id="arcB" d="M78.5,95.3 A37.5,37.5 0 0 0 153.5,95.3"/></defs><text font-family="Liberation Sans" font-weight="bold" font-size="7" fill="#d9a443" stroke="#d9a443" stroke-width="0.35" letter-spacing="-0.1"><textPath href="#arcT" startOffset="50%" text-anchor="middle" dominant-baseline="middle">CENTRAL BANK OF LESOTHO</textPath></text><text font-family="Liberation Sans" font-weight="bold" font-size="7" fill="#d9a443" stroke="#d9a443" stroke-width="0.35" letter-spacing="-0.2"><textPath href="#arcB" startOffset="50%" text-anchor="middle" dominant-baseline="middle">BANKA E KHOLO EA LESOTHO</textPath></text><path d="M85,91.4 H147 M85,100.8 H147" stroke="#d9a443" stroke-width="1.6"/><text x="116.5" y="99.2" font-family="Liberation Sans" font-weight="bold" font-size="6.2" fill="#d9a443" stroke="#d9a443" stroke-width="0.3" text-anchor="middle">MALOTI</text><circle cx="115.8" cy="69.6" r="3.3" fill="none" stroke="#d9a443" stroke-width="1.6"/><path d="M104,86.5 C106,80 110,74 115.8,73.6 C121.6,74 125.6,80 128,86.5 C121,88.8 111,88.8 104,86.5Z" fill="#d9a443"/><path d="M107.5,80.5 H124.5" stroke="#fff" stroke-width="0.7"/><path d="M90,108 C93,104 97,105 99,107 C101,104.5 104,105 105,108 L110,108.5 C114,107.5 120,107 122.5,109 C123,113 120,117 118,119 M122.5,109 C125,107 129,106 131,108 C134,105 138,105 142,107.5" fill="none" stroke="#d9a443" stroke-width="1.9"/><path d="M88,111 L96,121 M144,110 L136,121" stroke="#d9a443" stroke-width="1.6"/><circle cx="100" cy="108.5" r="1.8" fill="none" stroke="#d9a443" stroke-width="1.2"/><circle cx="138" cy="108" r="1.6" fill="none" stroke="#d9a443" stroke-width="1.2"/><path d="M95,40 C104,41.5 128,41.5 137.5,40 L138.2,46 C133,49.5 124,50.8 116,50.8 C108,50.8 99,49.5 94.2,46 Z" fill="#d9a443"/><path d="M99,45.5 h3 M105,46.5 h3 M111,47 h3 M118,47 h3 M125,46.5 h3 M131,45.5 h3" stroke="#fff" stroke-width="1.1" opacity="0.75"/><path d="M95.5,40 C94,34 94.5,28 98,24.5 C97,20 99.5,16.8 103,17 C106.5,17.5 107.5,21 106,24 C108.5,26 110,29 109.5,33 C109,36 108,38.5 107.5,40 Z" fill="#d9a443"/><path d="M95.5,40 C94,34 94.5,28 98,24.5 C97,20 99.5,16.8 103,17 C106.5,17.5 107.5,21 106,24 C108.5,26 110,29 109.5,33 C109,36 108,38.5 107.5,40 Z" fill="#d9a443" transform="translate(232.5,0) scale(-1,1)"/><path d="M99,30 C101,28.5 103,29.5 104,32.5 M97.5,35.5 C99.5,34.5 101.5,35.5 102.5,38.5 M101,21 C102,20 103.5,20.5 104,22 M133.5,30 C131.5,28.5 129.5,29.5 128.5,32.5 M135,35.5 C133,34.5 131,35.5 130,38.5 M131.5,21 C130.5,20 129,20.5 128.5,22" fill="none" stroke="#fff" stroke-width="1.1"/><path d="M108.5,40 C108,32 110,26 116.2,24 C122.5,26 124.5,32 124,40 Z" fill="#d9a443"/><path d="M110.5,38.5 C110.5,33 112,28.5 116.2,26.5 C120.5,28.5 122,33 122,38.5 Z" fill="#fff"/><path d="M112.5,28.5 L118.5,28 L119,34 L121,35.5 L117,37 L115,31 Z" fill="#d9a443"/><rect x="115" y="13" width="2.4" height="11" fill="#d9a443"/><path d="M109.5,17 L112,22.5 M123,17 L120.5,22.5" stroke="#d9a443" stroke-width="1.8"/><rect x="108.2" y="146.6" width="16.3" height="9.4" fill="#d9a443"/><path d="M111,148.5 v5.5 M114.3,148.5 v5.5 M117.6,148.5 v5.5 M121,148.5 v5.5" stroke="#fff" stroke-width="0.9"/><path d="M108.2,148 C100,144 90,144 87.5,149 C88,154.5 100,155 108.2,153.5Z M124.5,148 C132,144 143,144 146,149 C145.5,154.5 133,155 124.5,153.5Z" fill="#d9a443"/><path d="M91,149.5 C96,147.5 102,148 106,150 M142,149.5 C137,147.5 131,148 127,150" stroke="#fff" stroke-width="1" fill="none"/><path d="M106,155 L76,163.5 L98,160.5 L101,164.5 L110,156Z M126.5,155 L157,163.5 L135,160.5 L132,164.5 L123,156Z" fill="#d9a443"/></svg>
<div class="abs" style="left:205px;top:98px;width:112px;height:2px;background:#d4a245"></div>
<div class="abs" style="left:322px;top:96px;width:6px;height:6px;border-radius:50%;background:#d4a245"></div>
<div class="abs" style="left:331px;top:98px;width:106px;height:2px;background:#d4a245"></div>

<div class="abs" style="left:1190px;top:88px;width:339px;height:43px;border:1px solid #a3a3a3;background:#fff"></div>
<div class="abs" style="left:1479px;top:88px;width:1px;height:43px;background:#a3a3a3"></div>
<svg class="abs" style="left:1494px;top:103px" width="22" height="22" viewBox="0 0 22 22"><circle cx="9.6" cy="8.9" r="5.9" fill="none" stroke="#262626" stroke-width="2.3"/><line x1="13.6" y1="13.1" x2="17.4" y2="16.9" stroke="#262626" stroke-width="2.6" stroke-linecap="round"/></svg>

<div class="nav"></div>
<div class="abs" style="left:730px;top:176px;width:134px;height:35px;background:#d39e31"></div>
<div class="dv" style="left:54px"></div>
<div class="dv" style="left:114px"></div>
<div class="dv" style="left:238px"></div>
<div class="dv" style="left:426px"></div>
<div class="dv" style="left:572px"></div>
<div class="dv" style="left:1073px"></div>
<div class="dv" style="left:1277px"></div>
<div class="dv" style="left:1473px"></div>
<svg class="abs" style="left:73px;top:184px" width="22" height="19" viewBox="0 0 22 19"><path d="M1.5 10.2 L11 1.8 L20.5 10.2" fill="none" stroke="#fff" stroke-width="2.4"/><rect x="15" y="1" width="3" height="5" fill="#fff"/><path d="M3.6 10.3 L11 4.3 L18.4 10.3 V18.2 H13.2 V13.2 H8.8 V18.2 H3.6 Z" fill="#fff"/></svg>

<div class="hl" style="top:337px"></div>
<div class="hl" style="top:378px"></div>
<div class="hl" style="top:426px"></div>
<div class="hl" style="top:474px"></div>
<div class="hl" style="top:515px"></div>
<div class="hl" style="top:557px"></div>
<div class="hl" style="top:598px"></div>
<div class="hl" style="top:639px"></div>
<div class="hl" style="top:681px"></div>
<div class="hl" style="top:763px"></div>
<div class="hl" style="top:804px"></div>
<div class="hl" style="top:846px"></div>

<div class="gbtn" style="top:255px;width:210px"></div>
<div class="sl" style="top:353px"></div>
<div class="sl" style="top:389px"></div>
<div class="sl" style="top:425px"></div>
<div class="sl" style="top:462px"></div>
<div class="gbtn" style="top:513px;width:201px;height:38px"></div>
<svg class="abs" style="left:1062px;top:656px" width="441" height="210" viewBox="0 0 441 210"><rect x="0" y="0" width="441" height="210" fill="#ffffff"/><text x="3" y="182.1" font-family="Liberation Sans" font-size="10" fill="#595959">1.0</text><text x="3" y="158.3" font-family="Liberation Sans" font-size="10" fill="#595959">2.0</text><text x="3" y="134.6" font-family="Liberation Sans" font-size="10" fill="#595959">3.0</text><text x="3" y="110.8" font-family="Liberation Sans" font-size="10" fill="#595959">4.0</text><text x="3" y="87.1" font-family="Liberation Sans" font-size="10" fill="#595959">5.0</text><text x="3" y="63.3" font-family="Liberation Sans" font-size="10" fill="#595959">6.0</text><text x="3" y="39.6" font-family="Liberation Sans" font-size="10" fill="#595959">7.0</text><text x="3" y="15.8" font-family="Liberation Sans" font-size="10" fill="#595959">8.0</text><text x="6" y="205.8" font-family="Liberation Sans" font-size="10" fill="#595959">-</text><rect x="40.6" y="49.0" width="9.5" height="154.0" fill="#5b9bd5"/><rect x="71.9" y="44.3" width="9.5" height="158.7" fill="#5b9bd5"/><rect x="102.5" y="39.4" width="10.0" height="163.6" fill="#5b9bd5"/><rect x="133.3" y="61.0" width="9.7" height="142.0" fill="#5b9bd5"/><rect x="164.8" y="72.6" width="9.2" height="130.4" fill="#5b9bd5"/><rect x="194.9" y="80.3" width="10.2" height="122.7" fill="#5b9bd5"/><rect x="226.0" y="75.6" width="9.5" height="127.4" fill="#5b9bd5"/><rect x="257.3" y="56.6" width="9.5" height="146.4" fill="#5b9bd5"/><rect x="288.6" y="52.0" width="9.5" height="151.0" fill="#5b9bd5"/><rect x="318.9" y="42.5" width="9.2" height="160.5" fill="#5b9bd5"/><rect x="350.0" y="22.8" width="9.4" height="180.2" fill="#5b9bd5"/><rect x="381.5" y="25.3" width="9.5" height="177.7" fill="#5b9bd5"/><rect x="412.0" y="32.0" width="9.8" height="171.0" fill="#5b9bd5"/><rect x="29" y="202.5" width="403.6" height="1" fill="#d9d9d9"/><text x="39.3" y="40.2" font-family="Liberation Sans" font-size="10" fill="#404040">6.5</text><text x="379.5" y="15.8" font-family="Liberation Sans" font-size="10" fill="#404040">7.5</text><text x="410.8" y="23.6" font-family="Liberation Sans" font-size="10" fill="#404040">7.2</text></svg>
<div class="t" style="left:204.11px;top:72.40px;font-family:'Liberation Sans',sans-serif;font-size:19.5px;line-height:19.5px;font-weight:normal;color:#d4a245;letter-spacing:0.8px;transform:scaleX(0.7882);-webkit-text-stroke:0.35px #fff;">CENTRAL BANK OF LESOTHO</div>
<div class="t" style="left:205.81px;top:108.40px;font-family:'Liberation Sans',sans-serif;font-size:17px;line-height:17px;font-weight:normal;color:#d4a245;letter-spacing:0.5px;transform:scaleX(0.8888);-webkit-text-stroke:0.3px #fff;">BANKA E KHOLO EA LESOTHO</div>
<div class="t" style="left:1236.35px;top:45.80px;font-family:'Liberation Sans',sans-serif;font-size:15px;line-height:15px;font-weight:bold;color:#0b4d95;letter-spacing:0px;transform:scaleX(0.9454);">Opportunities</div>
<div class="t" style="left:1341.25px;top:45.80px;font-family:'Liberation Sans',sans-serif;font-size:15px;line-height:15px;font-weight:bold;color:#0b4d95;letter-spacing:0px;transform:scaleX(0.9529);">Feedback</div>
<div class="t" style="left:1419.07px;top:45.80px;font-family:'Liberation Sans',sans-serif;font-size:15px;line-height:15px;font-weight:bold;color:#0b4d95;letter-spacing:0px;transform:scaleX(0.9289);">Links</div>
<div class="t" style="left:1468.36px;top:45.80px;font-family:'Liberation Sans',sans-serif;font-size:15px;line-height:15px;font-weight:bold;color:#0b4d95;letter-spacing:0px;transform:scaleX(0.9444);">Contacts</div>
<div class="t" style="left:1203.35px;top:98.90px;font-family:'Liberation Sans',sans-serif;font-size:20px;line-height:20px;font-weight:bold;color:#9d9d9d;letter-spacing:0px;transform:scaleX(0.9514);">Search site</div>
<div class="t" style="left:139.40px;top:185.10px;font-family:'Liberation Sans',sans-serif;font-size:16px;line-height:16px;font-weight:bold;color:#ffffff;letter-spacing:2.2px;transform:scaleX(0.7347);-webkit-text-stroke:0.25px #fff;">ABOUT US</div>
<div class="t" style="left:263.26px;top:185.10px;font-family:'Liberation Sans',sans-serif;font-size:16px;line-height:16px;font-weight:bold;color:#ffffff;letter-spacing:2.2px;transform:scaleX(0.7421);-webkit-text-stroke:0.25px #fff;">MONETARY POLICY</div>
<div class="t" style="left:450.85px;top:185.10px;font-family:'Liberation Sans',sans-serif;font-size:16px;line-height:16px;font-weight:bold;color:#ffffff;letter-spacing:2.2px;transform:scaleX(0.7468);-webkit-text-stroke:0.25px #fff;">LEGISLATION</div>
<div class="t" style="left:597.15px;top:185.10px;font-family:'Liberation Sans',sans-serif;font-size:16px;line-height:16px;font-weight:bold;color:#ffffff;letter-spacing:2.2px;transform:scaleX(0.7532);-webkit-text-stroke:0.25px #fff;">PUBLICATIONS</div>
<div class="t" style="left:753.52px;top:185.10px;font-family:'Liberation Sans',sans-serif;font-size:16px;line-height:16px;font-weight:bold;color:#ffffff;letter-spacing:2.2px;transform:scaleX(0.7771);-webkit-text-stroke:0.25px #fff;">STATISTICS</div>
<div class="t" style="left:888.05px;top:185.10px;font-family:'Liberation Sans',sans-serif;font-size:16px;line-height:16px;font-weight:bold;color:#ffffff;letter-spacing:2.2px;transform:scaleX(0.7519);-webkit-text-stroke:0.25px #fff;">FINANCIAL STABILITY</div>
<div class="t" style="left:1097.55px;top:185.10px;font-family:'Liberation Sans',sans-serif;font-size:16px;line-height:16px;font-weight:bold;color:#ffffff;letter-spacing:2.2px;transform:scaleX(0.7488);-webkit-text-stroke:0.25px #fff;">FINANCIAL MARKETS</div>
<div class="t" style="left:1302.17px;top:185.10px;font-family:'Liberation Sans',sans-serif;font-size:16px;line-height:16px;font-weight:bold;color:#ffffff;letter-spacing:2.2px;transform:scaleX(0.7335);-webkit-text-stroke:0.25px #fff;">PUBLIC AWARENESS</div>
<div class="t" style="left:78.18px;top:289.50px;font-family:'Liberation Serif',serif;font-size:29px;line-height:29px;font-weight:normal;color:#d4a13b;letter-spacing:0px;transform:scaleX(1.0233);-webkit-text-stroke:0.3px #d4a13b;">Financial Stability Indicators</div>
<div class="t" style="left:550.60px;top:350.90px;font-family:'Liberation Sans',sans-serif;font-size:16px;line-height:16px;font-weight:normal;color:#2c71b6;letter-spacing:0px;">03-Jul-20</div>
<div class="t" style="left:644.00px;top:350.90px;font-family:'Liberation Sans',sans-serif;font-size:16px;line-height:16px;font-weight:normal;color:#2c71b6;letter-spacing:0px;">06-Jul-20</div>
<div class="t" style="left:737.60px;top:350.90px;font-family:'Liberation Sans',sans-serif;font-size:16px;line-height:16px;font-weight:normal;color:#2c71b6;letter-spacing:0px;">07-Jul-20</div>
<div class="t" style="left:830.80px;top:350.90px;font-family:'Liberation Sans',sans-serif;font-size:16px;line-height:16px;font-weight:normal;color:#2c71b6;letter-spacing:0px;">08-Jul-20</div>
<div class="t" style="left:924.30px;top:350.90px;font-family:'Liberation Sans',sans-serif;font-size:16px;line-height:16px;font-weight:normal;color:#2c71b6;letter-spacing:0px;">09-Jul-20</div>
<div class="t" style="left:85.43px;top:393.00px;font-family:'Liberation Sans',sans-serif;font-size:20px;line-height:20px;font-weight:normal;color:#2c71b6;letter-spacing:0px;transform:scaleX(0.9677);">1. Exchange Rates</div>
<div class="t" style="left:84.80px;top:488.20px;font-family:'Liberation Sans',sans-serif;font-size:16px;line-height:16px;font-weight:normal;color:#2c71b6;letter-spacing:0px;">Loti per US dollar</div>
<div class="t" style="left:550.60px;top:488.20px;font-family:'Liberation Sans',sans-serif;font-size:16px;line-height:16px;font-weight:normal;color:#2c71b6;letter-spacing:0px;">17.0661</div>
<div class="t" style="left:644.00px;top:488.20px;font-family:'Liberation Sans',sans-serif;font-size:16px;line-height:16px;font-weight:normal;color:#2c71b6;letter-spacing:0px;">16.9905</div>
<div class="t" style="left:737.60px;top:488.20px;font-family:'Liberation Sans',sans-serif;font-size:16px;line-height:16px;font-weight:normal;color:#2c71b6;letter-spacing:0px;">17.0673</div>
<div class="t" style="left:830.80px;top:488.20px;font-family:'Liberation Sans',sans-serif;font-size:16px;line-height:16px;font-weight:normal;color:#2c71b6;letter-spacing:0px;">16.9891</div>
<div class="t" style="left:924.30px;top:488.20px;font-family:'Liberation Sans',sans-serif;font-size:16px;line-height:16px;font-weight:normal;color:#2c71b6;letter-spacing:0px;">16.7981</div>
<div class="t" style="left:84.80px;top:529.30px;font-family:'Liberation Sans',sans-serif;font-size:16px;line-height:16px;font-weight:normal;color:#2c71b6;letter-spacing:0px;">Loti per Euro</div>
<div class="t" style="left:550.60px;top:529.30px;font-family:'Liberation Sans',sans-serif;font-size:16px;line-height:16px;font-weight:normal;color:#2c71b6;letter-spacing:0px;">19.1643</div>
<div class="t" style="left:644.00px;top:529.30px;font-family:'Liberation Sans',sans-serif;font-size:16px;line-height:16px;font-weight:normal;color:#2c71b6;letter-spacing:0px;">19.2477</div>
<div class="t" style="left:737.60px;top:529.30px;font-family:'Liberation Sans',sans-serif;font-size:16px;line-height:16px;font-weight:normal;color:#2c71b6;letter-spacing:0px;">19.2800</div>
<div class="t" style="left:830.80px;top:529.30px;font-family:'Liberation Sans',sans-serif;font-size:16px;line-height:16px;font-weight:normal;color:#2c71b6;letter-spacing:0px;">19.1747</div>
<div class="t" style="left:924.30px;top:529.30px;font-family:'Liberation Sans',sans-serif;font-size:16px;line-height:16px;font-weight:normal;color:#2c71b6;letter-spacing:0px;">19.0523</div>
<div class="t" style="left:84.80px;top:570.40px;font-family:'Liberation Sans',sans-serif;font-size:16px;line-height:16px;font-weight:normal;color:#2c71b6;letter-spacing:0px;">Loti per Pound</div>
<div class="t" style="left:550.60px;top:570.40px;font-family:'Liberation Sans',sans-serif;font-size:16px;line-height:16px;font-weight:normal;color:#2c71b6;letter-spacing:0px;">21.2600</div>
<div class="t" style="left:644.00px;top:570.40px;font-family:'Liberation Sans',sans-serif;font-size:16px;line-height:16px;font-weight:normal;color:#2c71b6;letter-spacing:0px;">21.2577</div>
<div class="t" style="left:737.60px;top:570.40px;font-family:'Liberation Sans',sans-serif;font-size:16px;line-height:16px;font-weight:normal;color:#2c71b6;letter-spacing:0px;">21.3929</div>
<div class="t" style="left:830.80px;top:570.40px;font-family:'Liberation Sans',sans-serif;font-size:16px;line-height:16px;font-weight:normal;color:#2c71b6;letter-spacing:0px;">21.3086</div>
<div class="t" style="left:924.30px;top:570.40px;font-family:'Liberation Sans',sans-serif;font-size:16px;line-height:16px;font-weight:normal;color:#2c71b6;letter-spacing:0px;">21.2621</div>
<div class="t" style="left:84.80px;top:611.80px;font-family:'Liberation Sans',sans-serif;font-size:16px;line-height:16px;font-weight:normal;color:#2c71b6;letter-spacing:0px;">Loti per SDR</div>
<div class="t" style="left:550.60px;top:611.80px;font-family:'Liberation Sans',sans-serif;font-size:16px;line-height:16px;font-weight:normal;color:#2c71b6;letter-spacing:0px;">23.5650</div>
<div class="t" style="left:644.00px;top:611.80px;font-family:'Liberation Sans',sans-serif;font-size:16px;line-height:16px;font-weight:normal;color:#2c71b6;letter-spacing:0px;">23.4245</div>
<div class="t" style="left:737.60px;top:611.80px;font-family:'Liberation Sans',sans-serif;font-size:16px;line-height:16px;font-weight:normal;color:#2c71b6;letter-spacing:0px;">23.5303</div>
<div class="t" style="left:830.80px;top:611.80px;font-family:'Liberation Sans',sans-serif;font-size:16px;line-height:16px;font-weight:normal;color:#2c71b6;letter-spacing:0px;">23.4674</div>
<div class="t" style="left:924.30px;top:611.80px;font-family:'Liberation Sans',sans-serif;font-size:16px;line-height:16px;font-weight:normal;color:#2c71b6;letter-spacing:0px;">23.2183</div>
<div class="t" style="left:85.00px;top:694.70px;font-family:'Liberation Sans',sans-serif;font-size:20px;line-height:20px;font-weight:normal;color:#2c71b6;letter-spacing:0px;">2. Interest rates</div>
<div class="t" style="left:85.00px;top:728.20px;font-family:'Liberation Sans',sans-serif;font-size:20px;line-height:20px;font-weight:normal;color:#2c71b6;letter-spacing:0px;">(Percent per Annum)</div>
<div class="t" style="left:84.80px;top:817.50px;font-family:'Liberation Sans',sans-serif;font-size:16px;line-height:16px;font-weight:normal;color:#2c71b6;letter-spacing:0px;">Central Bank</div>
<div class="t" style="left:84.80px;top:858.80px;font-family:'Liberation Sans',sans-serif;font-size:16px;line-height:16px;font-weight:normal;color:#2c71b6;letter-spacing:0px;">Lombard Facility</div>
<div class="t" style="left:550.60px;top:858.80px;font-family:'Liberation Sans',sans-serif;font-size:16px;line-height:16px;font-weight:normal;color:#2c71b6;letter-spacing:0px;">7.17</div>
<div class="t" style="left:644.00px;top:858.80px;font-family:'Liberation Sans',sans-serif;font-size:16px;line-height:16px;font-weight:normal;color:#2c71b6;letter-spacing:0px;">7.17</div>
<div class="t" style="left:737.60px;top:858.80px;font-family:'Liberation Sans',sans-serif;font-size:16px;line-height:16px;font-weight:normal;color:#2c71b6;letter-spacing:0px;">7.17</div>
<div class="t" style="left:830.80px;top:858.80px;font-family:'Liberation Sans',sans-serif;font-size:16px;line-height:16px;font-weight:normal;color:#2c71b6;letter-spacing:0px;">7.17</div>
<div class="t" style="left:924.30px;top:858.80px;font-family:'Liberation Sans',sans-serif;font-size:16px;line-height:16px;font-weight:normal;color:#2c71b6;letter-spacing:0px;">7.17</div>
<div class="t" style="left:1076.87px;top:263.90px;font-family:'Liberation Sans',sans-serif;font-size:19px;line-height:19px;font-weight:normal;color:#ffffff;letter-spacing:0px;transform:scaleX(0.8276);">FINANCIAL INDICATORS</div>
<div class="t" style="left:1061.67px;top:314.50px;font-family:'Liberation Sans',sans-serif;font-size:17px;line-height:17px;font-weight:normal;color:#333333;letter-spacing:0px;transform:scaleX(1.0268);">09 May 2022</div>
<div class="t" style="left:1065.40px;top:364.30px;font-family:'Liberation Sans',sans-serif;font-size:16px;line-height:16px;font-weight:normal;color:#2c71b6;letter-spacing:0px;">Loti / US Dollar</div>
<div class="t" style="left:1433.50px;top:364.30px;font-family:'Liberation Sans',sans-serif;font-size:16px;line-height:16px;font-weight:normal;color:#2c71b6;letter-spacing:0px;">16.2018</div>
<div class="t" style="left:1065.40px;top:400.50px;font-family:'Liberation Sans',sans-serif;font-size:16px;line-height:16px;font-weight:normal;color:#2c71b6;letter-spacing:0px;">Loti / Euro</div>
<div class="t" style="left:1434.50px;top:400.50px;font-family:'Liberation Sans',sans-serif;font-size:16px;line-height:16px;font-weight:normal;color:#2c71b6;letter-spacing:0px;">17.1139</div>
<div class="t" style="left:1065.40px;top:436.60px;font-family:'Liberation Sans',sans-serif;font-size:16px;line-height:16px;font-weight:normal;color:#2c71b6;letter-spacing:0px;">Loti / Pound</div>
<div class="t" style="left:1433.50px;top:436.60px;font-family:'Liberation Sans',sans-serif;font-size:16px;line-height:16px;font-weight:normal;color:#2c71b6;letter-spacing:0px;">20.0740</div>
<div class="t" style="left:1065.40px;top:473.40px;font-family:'Liberation Sans',sans-serif;font-size:16px;line-height:16px;font-weight:normal;color:#2c71b6;letter-spacing:0px;">Loti / SDR</div>
<div class="t" style="left:1433.50px;top:473.40px;font-family:'Liberation Sans',sans-serif;font-size:16px;line-height:16px;font-weight:normal;color:#2c71b6;letter-spacing:0px;">21.7265</div>
<div class="t" style="left:1077.19px;top:521.80px;font-family:'Liberation Sans',sans-serif;font-size:19px;line-height:19px;font-weight:normal;color:#ffffff;letter-spacing:0px;transform:scaleX(0.8071);">DETAILED INDICATORS</div>
<div class="t" style="left:1061.72px;top:572.00px;font-family:'Liberation Sans',sans-serif;font-size:18px;line-height:18px;font-weight:normal;color:#333333;letter-spacing:0px;transform:scaleX(0.9751);">Monthly Inflation (%) 2021 to 2022</div>
</div>
</body></html>
